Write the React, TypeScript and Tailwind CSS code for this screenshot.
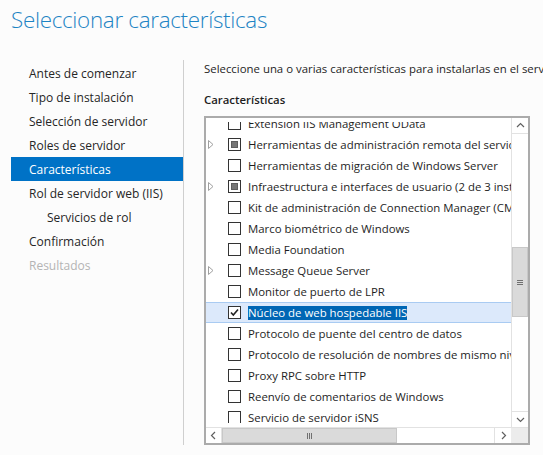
import React from "react";

type Item = {
  label: string;
  expander?: boolean;
  state?: "none" | "partial" | "checked";
  selected?: boolean;
};

const navItems = [
  { label: "Antes de comenzar" },
  { label: "Tipo de instalación" },
  { label: "Selección de servidor" },
  { label: "Roles de servidor" },
  { label: "Características", active: true },
  { label: "Rol de servidor web (IIS)" },
  { label: "Servicios de rol", sub: true },
  { label: "Confirmación" },
  { label: "Resultados", disabled: true },
];

const items: Item[] = [
  { label: "Extension IIS Management OData" },
  { label: "Herramientas de administración remota del servidor", expander: true, state: "partial" },
  { label: "Herramientas de migración de Windows Server" },
  { label: "Infraestructura e interfaces de usuario (2 de 3 instalados)", expander: true, state: "partial" },
  { label: "Kit de administración de Connection Manager (CMAK)" },
  { label: "Marco biométrico de Windows" },
  { label: "Media Foundation" },
  { label: "Message Queue Server", expander: true },
  { label: "Monitor de puerto de LPR" },
  { label: "Núcleo de web hospedable IIS", state: "checked", selected: true },
  { label: "Protocolo de puente del centro de datos" },
  { label: "Protocolo de resolución de nombres de mismo nivel" },
  { label: "Proxy RPC sobre HTTP" },
  { label: "Reenvío de comentarios de Windows" },
  { label: "Servicio de servidor iSNS" },
  { label: "Servicio de transferencia inteligente en segundo plano (BITS)" },
];

function Checkbox({ state }: { state?: Item["state"] }) {
  return (
    <div className="w-[13px] h-[13px] border border-[#333333] bg-white flex items-center justify-center shrink-0">
      {state === "partial" && <div className="w-[7px] h-[7px] bg-[#777777] border border-[#5f5f5f]" />}
      {state === "checked" && (
        <svg width="11" height="11" viewBox="0 0 11 11">
          <path d="M2 5.5 L4.3 8 L9 2.5" fill="none" stroke="#222" strokeWidth="1.6" />
        </svg>
      )}
    </div>
  );
}

function Expander() {
  return (
    <svg width="6" height="9" viewBox="0 0 6 9">
      <path d="M0.5 0.5 L5 4.5 L0.5 8.5 Z" fill="none" stroke="#a0a0a0" strokeWidth="1" />
    </svg>
  );
}

function Chevron({ dir }: { dir: "up" | "down" | "left" | "right" }) {
  const d = {
    up: "M1 6 L4.5 2.5 L8 6",
    down: "M1 3 L4.5 6.5 L8 3",
    left: "M6 1 L2.5 4.5 L6 8",
    right: "M3 1 L6.5 4.5 L3 8",
  }[dir];
  return (
    <svg width="9" height="9" viewBox="0 0 9 9">
      <path d={d} fill="none" stroke="#606060" strokeWidth="1.2" />
    </svg>
  );
}

export default function App() {
  return (
    <div className="w-[543px] h-[455px] overflow-hidden bg-[#fcfcfc] text-[#1e1e1e] font-['Open_Sans',sans-serif]">
      <div className="h-[60px] pl-[11px] pt-[4px]">
        <h1 className="text-[22.4px] font-light tracking-[-0.3px] text-[#1e84c4] leading-[32px]">
          Seleccionar características
        </h1>
      </div>
      <div className="flex">
        <nav className="w-[184px] h-[385px] shrink-0 border-r border-[#cfcfcf] pl-[11px] pt-[1px]">
          {navItems.map((n) => (
            <div
              key={n.label}
              className={`h-6 leading-[25px] text-[12px] ${n.sub ? "pl-[36px]" : "pl-[18px]"} ${
                n.active ? "bg-[#0072c6] text-white" : n.disabled ? "text-[#b4b4b4]" : "text-[#262626]"
              }`}
            >
              {n.label}
            </div>
          ))}
        </nav>
        <main className="pl-[20px] flex-1 min-w-0">
          <p className="text-[11.4px] leading-4 whitespace-nowrap pt-px">
            Seleccione una o varias características para instalarlas en el servidor seleccionado.
          </p>
          <p className="text-[11.4px] leading-4 font-semibold mt-[15px]">Características</p>
          <div className="mt-[8px] w-[326px] h-[329px] border-2 border-[#ababab] bg-white flex flex-col">
            <div className="flex flex-1 min-h-0">
              <div className="flex-1 min-w-0 py-[4px] flex">
                <div className="flex-1 min-w-0 overflow-hidden">
                  <div className="-mt-[9px]">
                    {items.map((it) => (
                      <div
                        key={it.label}
                        className={`h-[21px] flex items-center pl-[2px] whitespace-nowrap text-[11.4px] ${
                          it.selected ? "bg-[#dce9fb] border-y border-[#a9cbf2]" : ""
                        }`}
                      >
                        <div className="w-[20px] shrink-0 flex items-center">{it.expander && <Expander />}</div>
                        <Checkbox state={it.state} />
                        <span
                          className={`ml-[7px] leading-[14px] ${
                            it.selected ? "bg-[#0066b4] text-white" : "text-[#1e1e1e]"
                          }`}
                        >
                          {it.label}
                        </span>
                      </div>
                    ))}
                  </div>
                </div>
              </div>
              <div className="w-[17px] shrink-0 border-l border-[#e2e2e2] bg-white flex flex-col">
                <div className="h-[16px] flex items-center justify-center border-b border-[#e2e2e2]">
                  <Chevron dir="up" />
                </div>
                <div className="flex-1 flex flex-col">
                  <div className="h-[113px]" />
                  <div className="h-[70px] bg-[#dadada] border border-[#c8c8c8] flex flex-col items-center justify-center gap-[1px]">
                    <div className="w-[6px] h-px bg-[#707070]" />
                    <div className="w-[6px] h-px bg-[#707070]" />
                    <div className="w-[6px] h-px bg-[#707070]" />
                  </div>
                </div>
                <div className="h-[16px] flex items-center justify-center border-t border-[#e2e2e2]">
                  <Chevron dir="down" />
                </div>
              </div>
            </div>
            <div className="h-[16px] flex border-t border-[#e2e2e2]">
              <div className="w-[16px] flex items-center justify-center border-r border-[#e2e2e2]">
                <Chevron dir="left" />
              </div>
              <div className="flex-1 flex">
                <div className="w-[175px] bg-[#dadada] border border-[#c8c8c8] flex items-center justify-center gap-[1px]">
                  <div className="w-px h-[6px] bg-[#707070]" />
                  <div className="w-px h-[6px] bg-[#707070]" />
                  <div className="w-px h-[6px] bg-[#707070]" />
                </div>
              </div>
              <div className="w-[17px] flex items-center justify-center border-l border-[#e2e2e2]">
                <Chevron dir="right" />
              </div>
              <div className="w-[17px] bg-[#ececec]" />
            </div>
          </div>
        </main>
      </div>
    </div>
  );
}
